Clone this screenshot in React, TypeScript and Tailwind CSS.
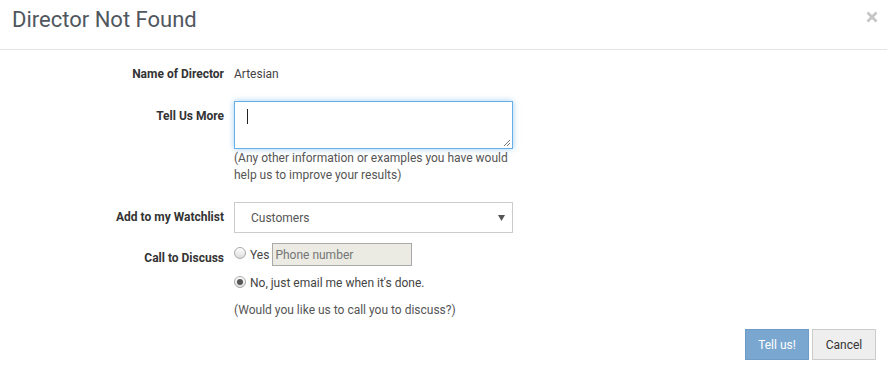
import React from "react";

export default function App() {
  const font = { fontFamily: "Roboto, 'Liberation Sans', Arial, sans-serif" };
  return (
    <div className="w-[887px] h-[372px] bg-white text-[12px] text-[#333]" style={font}>
      <div className="h-[50px] border-b border-[#e5e5e5] flex items-start justify-between pl-[12px] pr-[9px]">
        <h1 className="text-[22px] leading-[24px] mt-[8px] text-[#50575e]">Director Not Found</h1>
        <svg className="mt-[11px]" width="12" height="12" viewBox="0 0 12 12">
          <path d="M1.5 1.5 L10.5 10.5 M10.5 1.5 L1.5 10.5" stroke="#c4c4c4" strokeWidth="2.6" />
        </svg>
      </div>

      <div className="flex gap-[10px] mt-[17px]">
        <div className="w-[224px] text-right font-bold leading-[14px]">Name of Director</div>
        <div className="leading-[14px] text-[#444]">Artesian</div>
      </div>

      <div className="flex gap-[10px] mt-[20px]">
        <div className="w-[224px] text-right font-bold leading-[14px] pt-[8px]">Tell Us More</div>
        <div>
          <div className="relative w-[279px] h-[48px] border border-[#66afe9] shadow-[0_0_6px_rgba(102,175,233,0.6)] bg-white">
            <div className="absolute left-[12px] top-[7px] w-[1px] h-[15px] bg-[#222]" />
            <svg className="absolute right-[1px] bottom-[1px]" width="8" height="8" viewBox="0 0 8 8">
              <path d="M7 1 L1 7 M7 4 L4 7" stroke="#777" strokeWidth="1" />
            </svg>
          </div>
          <div className="text-[#555] leading-[17px] mt-[1px] w-[285px]">
            (Any other information or examples you have would help us to improve your results)
          </div>
        </div>
      </div>

      <div className="flex gap-[10px] mt-[18px]">
        <div className="w-[224px] text-right font-bold leading-[14px] pt-[8px]">Add to my Watchlist</div>
        <div className="w-[279px] h-[31px] border border-[#ccc] flex items-center justify-between pl-[16px] pr-[7px] text-[#555]">
          <span>Customers</span>
          <svg width="7" height="6" viewBox="0 0 7 6"><path d="M0 0 H7 L3.5 6 Z" fill="#555" /></svg>
        </div>
      </div>

      <div className="flex gap-[10px] mt-[10px]">
        <div className="w-[224px] text-right font-bold leading-[14px] pt-[8px]">Call to Discuss</div>
        <div>
          <div className="flex items-center">
            <span className="w-[12px] h-[12px] rounded-full border border-[#a9a9a9] bg-gradient-to-b from-[#fff] to-[#dcdcdc] mr-[4px] -mt-[3px]" />
            <span className="text-[#444]">Yes</span>
            <div className="ml-[3px] w-[140px] h-[23px] border border-[#a9a9a9] bg-[#ebebe4] text-[#757575] flex items-center pl-[2px]">Phone number</div>
          </div>
          <div className="flex items-center mt-[8px]">
            <span className="w-[12px] h-[12px] rounded-full border border-[#a9a9a9] bg-gradient-to-b from-[#fff] to-[#dcdcdc] mr-[4px] -mt-[2px] flex items-center justify-center">
              <span className="w-[6px] h-[6px] rounded-full bg-[#555]" />
            </span>
            <span className="text-[#444]">No, just email me when it's done.</span>
          </div>
          <div className="text-[#555] mt-[11px] leading-[14px]">(Would you like us to call you to discuss?)</div>
        </div>
      </div>

      <div className="flex justify-end gap-[3px] pr-[11px] mt-[12px]">
        <button className="w-[64px] h-[31px] bg-[#7aa7d0] border border-[#6f9cc6] text-white">Tell us!</button>
        <button className="w-[64px] h-[31px] bg-[#eee] border border-[#ccc] text-[#333]">Cancel</button>
      </div>
    </div>
  );
}
